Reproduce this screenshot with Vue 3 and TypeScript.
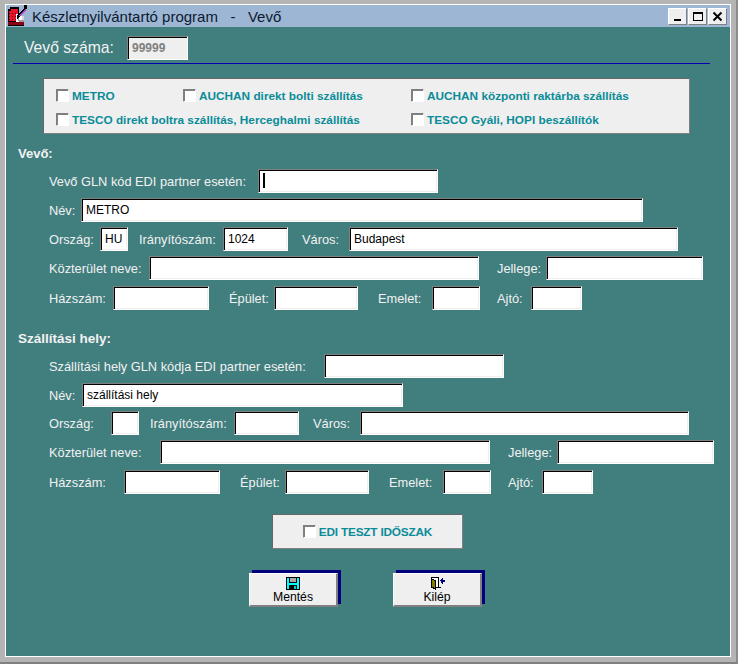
<template>
  <div class="screen">
    <div class="window">
      <div class="titlebar">
        <svg class="app-icon" width="22" height="22" viewBox="0 0 22 22" shape-rendering="crispEdges">
          <path d="M2 4h2V2h9v15H2z" fill="#000" />
          <path d="M3 6h2V4h7v12H3z" fill="#e4142c" />
          <path d="M3 8h9M3 11h9M3 14h9" stroke="#70000c" stroke-width="1" stroke-dasharray="1 2" fill="none" />
          <path d="M10 9h4v2h2v6h-6z" fill="#fff" />
          <path d="M12 12h1v4h-1zM13 15h5v2h-5z" fill="#9a9a9a" />
          <path d="M16 11h2v4h-2z" fill="#d8d8d8" />
          <path d="M11 11 19 2l2 1-8 10-2 1z" fill="#000" />
          <path d="M13 11l6-7 1 1-6 7z" fill="#b43cc8" />
          <path d="M18 0h3v3h-3z" fill="#000" />
          <path d="M2 17h16v3H2z" fill="#8a0014" />
          <path d="M2 20h16v1H2z" fill="#000" />
        </svg>
        <span class="title">{{ title }}</span>
        <div class="winbtns">
          <div class="winbtn"><span class="glyph-min"></span></div>
          <div class="winbtn"><span class="glyph-max"></span></div>
          <div class="winbtn winbtn-close">
            <svg width="11" height="11" viewBox="0 0 11 11"><path d="M1.5 1.5l8 8M9.5 1.5l-8 8" stroke="#000" stroke-width="2" /></svg>
          </div>
        </div>
      </div>

      <div class="content">
        <div class="number-row">
          <span class="number-label">Vevő száma:</span>
          <div class="field field-number">99999</div>
        </div>
        <div class="rule"></div>

        <div class="panel">
          <div class="panel-row">
            <label class="check check-a"><span class="box"></span>METRO</label>
            <label class="check check-b"><span class="box"></span>AUCHAN direkt bolti szállítás</label>
            <label class="check"><span class="box"></span>AUCHAN központi raktárba szállítás</label>
          </div>
          <div class="panel-row">
            <label class="check check-c"><span class="box"></span>TESCO direkt boltra szállítás, Herceghalmi szállítás</label>
            <label class="check"><span class="box"></span>TESCO Gyáli, HOPI beszállítók</label>
          </div>
        </div>

        <section v-for="section in sections" :key="section.title" class="section">
          <h2 class="section-title">{{ section.title }}</h2>
          <div
            v-for="(row, i) in section.rows"
            :key="i"
            class="row"
            :style="{ marginTop: `${row.gap}px` }"
          >
            <div
              v-for="item in row.items"
              :key="item.label"
              class="item"
              :style="{ marginRight: `${item.after ?? 0}px` }"
            >
              <span class="label" :style="{ width: `${item.lw}px` }">{{ item.label }}</span>
              <div class="field" :style="{ width: `${item.w}px` }">
                <span v-if="item.caret" class="caret"></span>{{ item.value }}
              </div>
            </div>
          </div>
        </section>

        <div class="edi-panel">
          <label class="check edi-check"><span class="box"></span>EDI TESZT IDŐSZAK</label>
        </div>

        <div class="actions">
          <button type="button" class="action">
            <svg width="16" height="15" viewBox="0 0 16 15" shape-rendering="crispEdges">
              <path d="M0 0h15l1 1v14H0z" fill="#000" />
              <path d="M1 1h14v13H1z" fill="#00ffff" />
              <path d="M3 1h10v6H3z" fill="#000" />
              <path d="M4 1h8v5H4z" fill="#a8a8a8" />
              <path d="M3 9h10v6H3z" fill="#000" />
              <path d="M9 10h3v4H9z" fill="#00c8c8" />
            </svg>
            <span>Mentés</span>
          </button>
          <button type="button" class="action">
            <svg width="17" height="15" viewBox="0 0 17 15" shape-rendering="crispEdges">
              <path d="M1 0h9v12h2v1H6v-1h3V1H2v1H1z" fill="#000" />
              <path d="M2 1h7v11H6V4L2 2z" fill="#fff" />
              <path d="M1 1l6 3v11l-6-3z" fill="#000" />
              <path d="M2 3l4 2v8l-4-2z" fill="#808000" />
              <path d="M11 4h1V3h1V2h1V1h1v2h2v3h-2v2h-1V7h-1V6h-1V5h-1z" fill="#000080" />
            </svg>
            <span>Kilép</span>
          </button>
        </div>
      </div>
    </div>
  </div>
</template>

<script setup lang="ts">
interface Item {
  label: string;
  lw: number;
  w: number;
  after?: number;
  value?: string;
  caret?: boolean;
}

interface Row {
  gap: number;
  items: Item[];
}

const title = 'Készletnyilvántartó program   -   Vevő';

function lowerRows(countryLw: number, streetLw: number, houseLw: number, city: string) {
  return {
    country: { label: 'Ország:', lw: countryLw, w: 28, after: 11 },
    zip: { label: 'Irányítószám:', lw: 84, w: 65, after: 14 },
    city: { label: 'Város:', lw: 47, w: 329, value: city },
    street: { label: 'Közterület neve:', lw: streetLw, w: 330, after: 18 },
    kind: { label: 'Jellege:', lw: 49, w: 157 },
    house: { label: 'Házszám:', lw: houseLw, w: 96, after: 20 },
    building: { label: 'Épület:', lw: 45, w: 84, after: 20 },
    floor: { label: 'Emelet:', lw: 54, w: 48, after: 17 },
    door: { label: 'Ajtó:', lw: 34, w: 51 },
  };
}

const buyer = lowerRows(51, 100, 64, 'Budapest');
const shipping = lowerRows(62, 111, 75, '');

const sections: { title: string; rows: Row[] }[] = [
  {
    title: 'Vevő:',
    rows: [
      { gap: 0, items: [{ label: 'Vevő GLN kód EDI partner esetén:', lw: 209, w: 180, caret: true }] },
      { gap: 5, items: [{ label: 'Név:', lw: 32, w: 562, value: 'METRO' }] },
      { gap: 5, items: [{ ...buyer.country, value: 'HU' }, { ...buyer.zip, value: '1024' }, buyer.city] },
      { gap: 5, items: [buyer.street, buyer.kind] },
      { gap: 6, items: [buyer.house, buyer.building, buyer.floor, buyer.door] },
    ],
  },
  {
    title: 'Szállítási hely:',
    rows: [
      { gap: 0, items: [{ label: 'Szállítási hely GLN kódja EDI partner esetén:', lw: 275, w: 180 }] },
      { gap: 5, items: [{ label: 'Név:', lw: 33, w: 321, value: 'szállítási hely' }] },
      { gap: 4, items: [shipping.country, shipping.zip, shipping.city] },
      { gap: 5, items: [shipping.street, shipping.kind] },
      { gap: 6, items: [shipping.house, shipping.building, shipping.floor, shipping.door] },
    ],
  },
];
</script>

<style>
html,
body {
  margin: 0;
  background: #b4b4b4;
}
</style>

<style scoped>
.screen {
  width: 738px;
  height: 664px;
  box-sizing: border-box;
  padding: 4px 5px 0 5px;
  background: #b4b4b4;
  border-bottom: 2px solid #808080;
  border-right: 2px solid #8c8c8c;
  font-family: "Liberation Sans", Arial, sans-serif;
  font-size: 12.8px;
}

.window {
  height: 653px;
  box-sizing: border-box;
  border: 1px solid #fff;
  display: flex;
  flex-direction: column;
  background: #417e7e;
}

.titlebar {
  height: 22px;
  flex: none;
  display: flex;
  align-items: center;
  background: #9db6d4;
  position: relative;
}

.app-icon {
  flex: none;
}

.title {
  margin-left: 4px;
  font-size: 15px;
  color: #0c1a30;
  white-space: pre;
}

.winbtns {
  margin-left: auto;
  margin-right: 3px;
  display: flex;
  gap: 1px;
}

.winbtn {
  width: 19px;
  height: 17px;
  box-sizing: border-box;
  background: #efefef;
  border: 1px solid;
  border-color: #fff #808080 #808080 #fff;
  display: flex;
  align-items: center;
  justify-content: center;
  position: relative;
}

.glyph-min {
  width: 7px;
  height: 2px;
  background: #000;
  margin-top: 8px;
}

.glyph-max {
  width: 10px;
  height: 9px;
  box-sizing: border-box;
  border: 1px solid #000;
  border-top-width: 2px;
}

.content {
  flex: 1;
  padding: 9px 0 0;
  position: relative;
}

.number-row {
  display: flex;
  align-items: center;
  height: 24px;
  padding-left: 18px;
}

.number-label {
  width: 103px;
  font-size: 15.7px;
  color: #f2f2f2;
}

.field {
  height: 24px;
  box-sizing: border-box;
  border: 1px solid;
  border-color: #808080 #fff #fff #808080;
  box-shadow: inset 1px 1px 0 #000, inset -1px -1px 0 #efefef;
  background: #fff;
  color: #000;
  font-size: 12px;
  padding: 3px 0 0 4px;
  line-height: 17px;
  white-space: nowrap;
  overflow: hidden;
  display: flex;
  align-items: flex-start;
}

.field-number {
  width: 61px;
  background: #efefef;
  color: #808080;
  font-weight: bold;
  box-shadow: inset 1px 1px 0 #000;
}

.caret {
  width: 2px;
  height: 15px;
  background: #000;
}

.rule {
  height: 1px;
  margin: 3px 20px 0 7px;
  background: #0000b0;
}

.panel {
  margin: 14px 40px 0 37px;
  height: 56px;
  box-sizing: border-box;
  border: 1px solid;
  border-color: #666 #808080 #808080 #666;
  background: #efefef;
  padding: 9px 0 0 12px;
  display: flex;
  flex-direction: column;
  gap: 9px;
}

.panel-row {
  display: flex;
  height: 15px;
}

.check {
  display: flex;
  align-items: center;
  gap: 3px;
  font-size: 11.8px;
  font-weight: bold;
  color: #0a8c98;
  white-space: nowrap;
}

.check-a {
  width: 127px;
}

.check-b {
  width: 228px;
}

.check-c {
  width: 355px;
}

.box {
  width: 13px;
  height: 13px;
  flex: none;
  box-sizing: border-box;
  border: 1px solid;
  border-color: #808080 #fff #fff #808080;
  box-shadow: inset 1px 1px 0 #808080;
  background: #fff;
}

.section {
  padding-left: 43px;
  margin-top: 13px;
}

.section + .section {
  margin-top: 22px;
}

.section-title {
  margin: 0 0 8px -31px;
  font-size: 13px;
  line-height: 14px;
  font-weight: bold;
  color: #f2f2f2;
}

.section + .section .section-title {
  font-size: 13.5px;
}

.row {
  display: flex;
  height: 24px;
}

.item {
  display: flex;
  align-items: center;
}

.label {
  flex: none;
  color: #f2f2f2;
  white-space: nowrap;
}

.edi-panel {
  width: 191px;
  height: 35px;
  box-sizing: border-box;
  margin: 20px 0 0 266px;
  border: 1px solid;
  border-color: #666 #808080 #808080 #666;
  background: #efefef;
  display: flex;
  align-items: center;
  justify-content: center;
}

.edi-check {
  letter-spacing: -0.2px;
}

.actions {
  display: flex;
  gap: 55px;
  margin: 24px 0 0 243px;
}

.action {
  width: 89px;
  height: 34px;
  box-sizing: border-box;
  padding: 3px 0 0;
  background: #efefef;
  border: 1px solid;
  border-color: #fff #808080 #808080 #fff;
  border-width: 1px 2px 2px 1px;
  box-shadow: 3px -3px 0 #00007f;
  font-family: inherit;
  font-size: 12.2px;
  color: #000;
  display: flex;
  flex-direction: column;
  align-items: center;
  line-height: 15px;
}
</style>
